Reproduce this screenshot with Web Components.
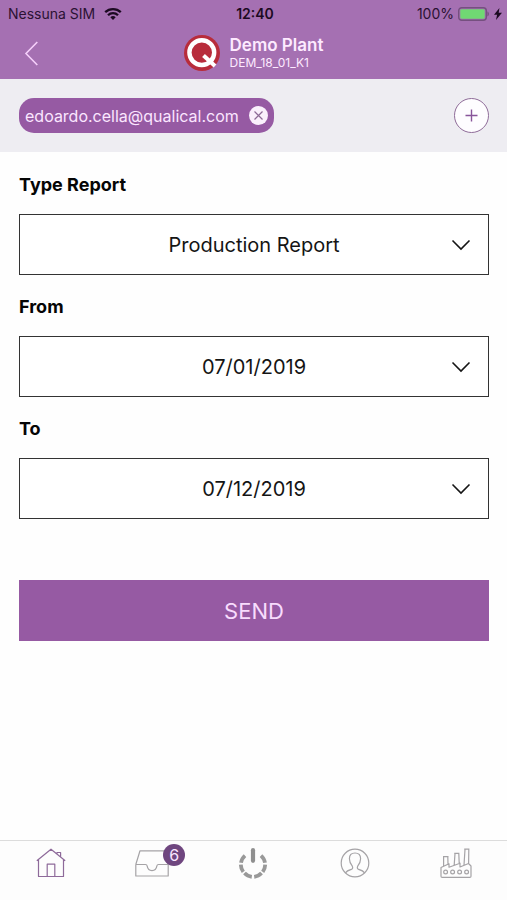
<!DOCTYPE html>
<html lang="en">
<head>
<meta charset="utf-8">
<meta name="viewport" content="width=device-width, initial-scale=1">
<title>Demo Plant – Report</title>
<style>
  html, body { margin: 0; height: 100%; }
  body {
    font-family: Inter, "Liberation Sans", sans-serif;
    color: #111;
    background: #fefefe;
    --purple: #965aa3;
    --bar: #a570b2;
  }
  report-app { min-height: 100vh; }
</style>
</head>
<body>
<report-app></report-app>

<script>
const define = (name, html, setup) => {
  const template = document.createElement('template');
  template.innerHTML = html;
  customElements.define(name, class extends HTMLElement {
    connectedCallback() {
      if (this.shadowRoot) return;
      const root = this.attachShadow({ mode: 'open' });
      root.append(template.content.cloneNode(true));
      if (setup) setup(this, root);
    }
  });
};

/* Phone status bar: carrier, time, battery */
define('status-bar', `
  <style>
    :host { display: grid; grid-template-columns: 1fr auto 1fr; align-items: center; height: 27px; padding: 0 5px 0 8px; font-size: 14px; line-height: 19px; color: #2b1233; }
    div { display: flex; align-items: center; gap: 9px; }
    .right { justify-content: flex-end; gap: 4px; }
    time { font-weight: 600; color: #1c0a22; }
    svg { display: block; }
  </style>
  <div><span><slot name="carrier"></slot></span>
    <svg width="18" height="14" viewBox="0 0 18 14" fill="none" stroke="#1c0a22" stroke-width="2.3" aria-hidden="true">
      <path d="M1.2 5.2a11.2 11.2 0 0 1 15.6 0M4 8.2a7.1 7.1 0 0 1 10 0"/><path d="M9 13 6.3 10.2a3.9 3.9 0 0 1 5.4 0Z" fill="#1c0a22" stroke="none"/>
    </svg>
  </div>
  <time><slot name="time"></slot></time>
  <div class="right"><span><slot name="battery"></slot></span>
    <svg width="32" height="14" viewBox="0 0 32 14" aria-hidden="true">
      <rect x=".7" y=".7" width="27.6" height="12.6" rx="3" fill="none" stroke="#75507f" stroke-width="1.4"/>
      <rect x="2.3" y="2.3" width="24.4" height="9.4" rx="1.4" fill="#70d873"/>
      <path d="M29.4 4.6c2 .6 2 4.2 0 4.8Z" fill="#75507f"/>
    </svg>
    <svg width="8" height="12" viewBox="0 0 8 12" aria-hidden="true"><path d="M5.4 0 0 6.8h3.1L2 12l6-7.2H4.7Z" fill="#1c0a22"/></svg>
  </div>`);

/* Title bar with back button and plant identity */
define('plant-header', `
  <style>
    :host { display: grid; grid-template-columns: 1fr auto 1fr; align-items: center; height: 52px; padding: 0 19px; color: #fdeaff; }
    button { justify-self: start; border: 0; padding: 4px 5px; background: none; color: inherit; }
    svg { display: block; }
    .brand { display: flex; align-items: center; gap: 10px; }
    h1 { margin: 0; font-size: 17px; line-height: 19px; font-weight: 600; }
    p { margin: 0; font-size: 12px; line-height: 15px; }
  </style>
  <button type="button" aria-label="Back"><svg width="15" height="25" viewBox="0 0 15 25" fill="none" stroke="#f5cffa" stroke-width="1.6"><path d="M13.3 1 2 12.5 13.3 24"/></svg></button>
  <div class="brand">
    <svg width="36" height="36" viewBox="0 0 36 36" aria-hidden="true">
      <circle cx="18" cy="18" r="18" fill="#b82c3b"/>
      <circle cx="17.800" cy="17.600" r="12.400" fill="none" stroke="#fff" stroke-width="4.400"/>
      <path d="m19.500 20.500 11.500 10.500" stroke="#fff" stroke-width="4"/>
    </svg>
    <div><h1><slot name="title"></slot></h1><p><slot name="code"></slot></p></div>
  </div>`);

define('recipient-chip', `
  <style>
    :host { display: inline-flex; align-items: center; gap: 10px; height: 35px; padding: 0 6px; border-radius: 15px; background: var(--purple); color: #fbe6ff; font-size: 16px; line-height: 22px; }
    button { display: block; border: 0; padding: 0; border-radius: 50%; background: #faf0fc; }
    svg { display: block; }
  </style>
  <slot></slot>
  <button type="button" aria-label="Remove recipient"><svg width="19" height="19" viewBox="0 0 19 19" stroke="#8d6a96" stroke-width="1.2"><path d="m5.5 5.5 8 8m0-8-8 8"/></svg></button>`);

define('recipient-bar', `
  <style>
    :host { display: flex; align-items: center; justify-content: space-between; box-sizing: border-box; height: 73px; padding: 0 18px 0 19px; background: #eeedf2; }
    button { box-sizing: border-box; width: 35px; height: 35px; border: 1px solid #8f6c99; border-radius: 50%; padding: 0; background: #fefdff; display: grid; place-items: center; }
  </style>
  <slot></slot>
  <button type="button" aria-label="Add recipient"><svg width="13" height="13" viewBox="0 0 13 13" stroke="#88559a" stroke-width="1.4"><path d="M6.5.5v12M.5 6.5h12"/></svg></button>`);

/* Labelled drop-down; the options are passed in as children */
define('picker-field', `
  <style>
    :host { display: flex; flex-direction: column; gap: 17px; }
    label { align-self: flex-start; font-size: 18px; line-height: 24px; font-weight: 700; color: #050505; }
    .box { display: grid; align-items: center; }
    .box > * { grid-area: 1 / 1; }
    select { appearance: none; box-sizing: border-box; width: 100%; height: 61px; margin: 0; border: 1px solid #333; border-radius: 0; padding: 0 48px; background: #fff; color: #151515; font: 400 20px/28px Inter, "Liberation Sans", sans-serif; text-align: center; text-align-last: center; }
    svg { justify-self: end; margin-right: 18px; pointer-events: none; }
  </style>
  <label for="choice"></label>
  <div class="box">
    <select id="choice"></select>
    <svg width="20" height="12" viewBox="0 0 20 12" fill="none" stroke="#151515" stroke-width="1.6" aria-hidden="true"><path d="m1.5 1.5 8.5 8.5 8.5-8.5"/></svg>
  </div>`, (host, root) => {
    root.querySelector('label').textContent = host.getAttribute('label');
    root.querySelector('select').append(...host.querySelectorAll('option'));
  });

define('send-button', `
  <style>
    :host { display: block; }
    button { display: block; width: 100%; height: 61px; border: 0; padding: 0; background: var(--purple); color: #f8dcfd; font: 400 22px/28px Inter, "Liberation Sans", sans-serif; }
  </style>
  <button type="button"><slot></slot></button>`);

define('tab-item', `
  <style>
    :host { display: flex; justify-content: center; color: #a5a3a6; }
    :host([active]) { color: #8e6a9a; }
    a { position: relative; display: block; color: inherit; text-decoration: none; }
    .badge { position: absolute; top: -4px; right: -16px; width: 22px; height: 22px; border-radius: 50%; background: #6f467f; color: #fae6ff; font-size: 16px; line-height: 22px; text-align: center; }
    .badge[hidden] { display: none; }
  </style>
  <a href="#"><slot></slot><span class="badge"></span></a>`, (host, root) => {
    root.querySelector('a').setAttribute('aria-label', host.getAttribute('label'));
    const badge = root.querySelector('.badge');
    badge.textContent = host.getAttribute('badge') || '';
    badge.hidden = !host.hasAttribute('badge');
  });

define('tab-bar', `
  <style>
    :host { display: grid; grid-template-columns: repeat(5, 1fr); box-sizing: border-box; height: 60px; padding-top: 7px; border-top: 1px solid #dcdcdc; background: #fdfdfd; }
  </style>
  <slot></slot>`);

define('report-app', `
  <style>
    :host { display: flex; flex-direction: column; }
    header { background: var(--bar); }
    main { flex: 1; display: flex; flex-direction: column; gap: 20px; padding: 21px 18px 20px 19px; }
    send-button { margin-top: 41px; }
    svg { display: block; fill: none; stroke: currentColor; stroke-width: 1.2; stroke-linejoin: round; }
  </style>
  <header>
    <status-bar><span slot="carrier">Nessuna SIM</span><span slot="time">12:40</span><span slot="battery">100%</span></status-bar>
    <plant-header><span slot="title">Demo Plant</span><span slot="code">DEM_18_01_K1</span></plant-header>
  </header>
  <recipient-bar><recipient-chip>edoardo.cella@qualical.com</recipient-chip></recipient-bar>
  <main>
    <picker-field label="Type Report"><option>Production Report</option></picker-field>
    <picker-field label="From"><option>07/01/2019</option></picker-field>
    <picker-field label="To"><option>07/12/2019</option></picker-field>
    <send-button>SEND</send-button>
  </main>
  <tab-bar>
    <tab-item active label="Home"><svg width="30" height="30" viewBox="0 0 30 30">
      <path d="M2.5 11.500V28.500H27.500V11.500M.8 12.800 15 1.200 29.200 12.800M21 6V4.500h3.600V9M11.200 28.500V16.200h7.600v12.300"/></svg></tab-item>
    <tab-item label="Inbox" badge="6"><svg width="34" height="30" viewBox="0 0 34 30">
      <path d="M.8 16.500 5 2.800H29L33.200 16.500V28H.8V16.500H10.500c1.200 0 1.500.6 1.700 1.600 1 5.900 8.600 5.900 9.600 0 .2-1 .5-1.600 1.700-1.600H33"/></svg></tab-item>
    <tab-item label="Power"><svg width="30" height="32" viewBox="0 0 30 32">
      <path d="M15 2.200v10.600" stroke-width="4.200" stroke-linecap="round" stroke="#8f8f8f"/>
      <path d="M7 7.600A12.300 12.300 0 0 0 3 14.800M2.800 16.600a12.300 12.300 0 0 0 2.500 7.200M6.500 25a12.300 12.300 0 0 0 7.300 3.800M16.200 28.800a12.300 12.300 0 0 0 7.300-3.800M24.700 23.800a12.300 12.300 0 0 0 2.500-7.200M27 14.800A12.300 12.300 0 0 0 23 7.600" stroke-width="3.800" stroke="#999"/></svg></tab-item>
    <tab-item label="Profile"><svg width="30" height="30" viewBox="0 0 30 30">
      <circle cx="15" cy="15" r="13.800"/>
      <path d="M5.400 25c1.200-2 3-2.800 6-3.600 1.400-.4 1.600-1.800.9-3.200-1.900-2.400-2.900-5-2.900-7.400C9.400 7 11.600 5 15 5s5.600 2 5.600 5.800c0 2.400-1 5-2.900 7.400-.7 1.400-.5 2.800.9 3.200 3 .8 4.800 1.600 6 3.600"/></svg></tab-item>
    <tab-item label="Plant"><svg width="32" height="30" viewBox="0 0 32 30">
      <path d="M1 28V19.500L9 15.800V19.200L20 15.200V19L28.500 15.500 31 18V28.200c0 .7-.5 1.200-1.200 1.200H2.200C1.500 29.400 1 28.900 1 28.200ZM3.600 18V8.800M8 15.800 7.800 8.800M3 8.600h5.500M14.200 17 15 5.600M19.200 15 18.800 5.600M14.200 5.400h5.200M24 17 25 1.500M28.600 15.500 28.800 1.500M24.200 1.200h5.200"/>
      <g><circle cx="5.600" cy="24" r="1.900"/><circle cx="12.600" cy="24" r="1.900"/><circle cx="19.600" cy="24" r="1.900"/><circle cx="26.600" cy="24" r="1.900"/></g></svg></tab-item>
  </tab-bar>`);
</script>
</body>
</html>
